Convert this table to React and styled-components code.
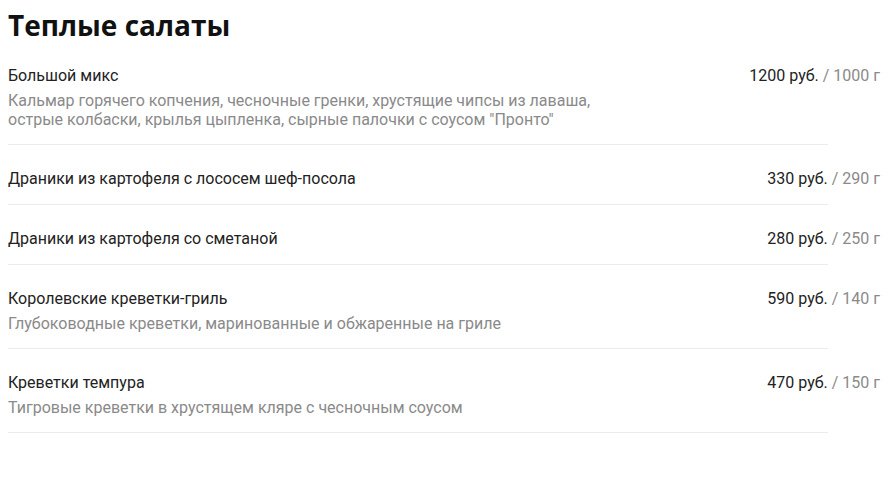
import React from 'react';
import styled, { createGlobalStyle } from 'styled-components';

const GlobalStyle = createGlobalStyle`
  body {
    margin: 0;
    background: #fff;
    font-family: Roboto, "Noto Sans", sans-serif;
  }
`;

const Page = styled.div`
  padding: 7px 13px 0 8px;
`;

const Title = styled.h2`
  margin: 0 0 23px;
  font-family: "Open Sans", "Noto Sans", sans-serif;
  font-size: 28px;
  line-height: 36px;
  font-weight: 700;
  color: #111;
`;

const List = styled.div`
  display: flex;
  flex-direction: column;
`;

const Item = styled.div`
  padding-top: ${p => (p.$first ? '0' : '24px')};

  &::after {
    content: '';
    display: block;
    height: 1px;
    background: #ececec;
    margin: 15px 52px 0 0;
  }
`;

const Head = styled.div`
  display: flex;
  justify-content: space-between;
  align-items: baseline;
  font-size: 16px;
  line-height: 20px;
  color: #222;
`;

const Price = styled.span`
  white-space: nowrap;
`;

const Weight = styled.span`
  color: #8a8a8a;
`;

const Desc = styled.div`
  margin-top: 5px;
  max-width: 600px;
  font-size: 16px;
  line-height: 19px;
  color: #8a8a8a;
`;

const items = [
  {
    name: 'Большой микс',
    price: '1200 руб.',
    weight: '1000 г',
    desc: 'Кальмар горячего копчения, чесночные гренки, хрустящие чипсы из лаваша, острые колбаски, крылья цыпленка, сырные палочки с соусом "Пронто"',
  },
  { name: 'Драники из картофеля с лососем шеф-посола', price: '330 руб.', weight: '290 г' },
  { name: 'Драники из картофеля со сметаной', price: '280 руб.', weight: '250 г' },
  {
    name: 'Королевские креветки-гриль',
    price: '590 руб.',
    weight: '140 г',
    desc: 'Глубоководные креветки, маринованные и обжаренные на гриле',
  },
  {
    name: 'Креветки темпура',
    price: '470 руб.',
    weight: '150 г',
    desc: 'Тигровые креветки в хрустящем кляре с чесночным соусом',
  },
];

const App = () => {
  return (
    <Page>
      <GlobalStyle />
      <Title>Теплые салаты</Title>
      <List>
        {items.map((it, i) => (
          <Item key={it.name} $first={i === 0}>
            <Head>
              <span>{it.name}</span>
              <Price>
                {it.price} <Weight>/ {it.weight}</Weight>
              </Price>
            </Head>
            {it.desc && <Desc>{it.desc}</Desc>}
          </Item>
        ))}
      </List>
    </Page>
  );
};

export default App;
